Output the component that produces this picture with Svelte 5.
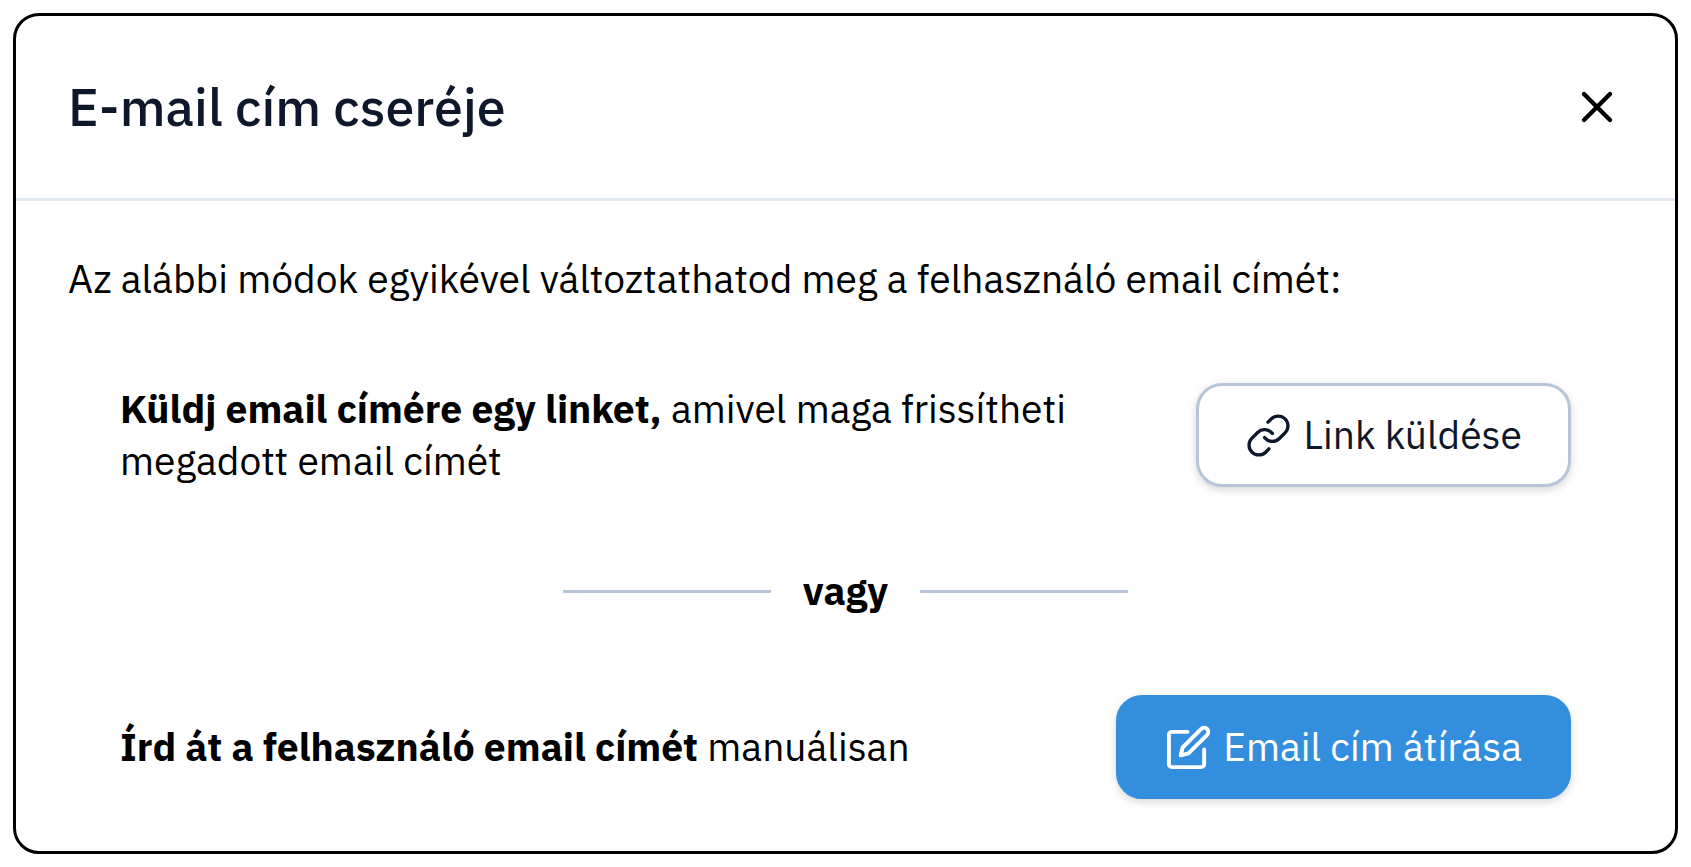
<script>
  let open = $state(true);
</script>

{#if open}
  <div class="dialog" role="dialog" aria-labelledby="dialog-title">
    <header>
      <h1 id="dialog-title">E-mail cím cseréje</h1>
      <button class="close" type="button" aria-label="Bezárás" onclick={() => (open = false)}>
        <svg viewBox="0 0 24 24" aria-hidden="true"><path d="M18 6 6 18M6 6l12 12" /></svg>
      </button>
    </header>
    <div class="body">
      <p class="intro">Az alábbi módok egyikével változtathatod meg a felhasználó email címét:</p>
      <section class="option">
        <p><strong>Küldj email címére egy linket,</strong> amivel maga frissítheti megadott email címét</p>
        <button class="btn outline" type="button">
          <svg viewBox="0 0 24 24" aria-hidden="true">
            <path d="M10 13a5 5 0 0 0 7.54.54l3-3a5 5 0 0 0-7.07-7.07l-1.72 1.71" />
            <path d="M14 11a5 5 0 0 0-7.54-.54l-3 3a5 5 0 0 0 7.07 7.07l1.71-1.71" />
          </svg>
          <span>Link küldése</span>
        </button>
      </section>
      <div class="divider"><strong>vagy</strong></div>
      <section class="option">
        <p><strong>Írd át a felhasználó email címét</strong> manuálisan</p>
        <button class="btn primary" type="button">
          <svg viewBox="0 0 24 24" aria-hidden="true">
            <path d="M11.5 4h-8A1.5 1.5 0 0 0 2 5.5v15A1.5 1.5 0 0 0 3.5 22h15a1.5 1.5 0 0 0 1.5-1.5V13" />
            <path d="M18.5 2.5a2.121 2.121 0 0 1 3 3L12 15l-4 1 1-4z" />
          </svg>
          <span>Email cím átírása</span>
        </button>
      </section>
    </div>
  </div>
{/if}

<style>
  :global(body) {
    background: #fff;
  }
  .dialog {
    box-sizing: border-box;
    margin: 13px;
    border: 3px solid #000;
    border-radius: 26px;
    background: #fff;
    color: #000;
    font-family: "IBM Plex Sans", Roboto, sans-serif;
    font-size: 39px;
    line-height: 52px;
  }
  header {
    display: flex;
    align-items: center;
    justify-content: space-between;
    padding: 52px;
    border-bottom: 3px solid #e2e8f0;
  }
  h1 {
    margin: 0;
    color: #0f172a;
    font-size: 52px;
    line-height: 78px;
    font-weight: 500;
  }
  p {
    margin: 0;
  }
  svg {
    flex: none;
    fill: none;
    stroke: currentColor;
    stroke-linecap: round;
    stroke-linejoin: round;
  }
  .close {
    display: flex;
    padding: 0;
    border: 0;
    background: none;
    color: #000;
    cursor: pointer;
  }
  .close svg {
    width: 52px;
    height: 52px;
    stroke-width: 2;
  }
  .body {
    padding: 52px;
  }
  .option {
    display: flex;
    align-items: center;
    justify-content: space-between;
    gap: 104px;
    padding: 0 52px;
  }
  .intro {
    margin-bottom: 78px;
  }
  .divider {
    display: flex;
    align-items: center;
    justify-content: center;
    gap: 32px;
    margin: 78px 0;
  }
  .divider::before,
  .divider::after {
    content: "";
    width: 208px;
    height: 3px;
    background: #b8c5d9;
  }
  .btn {
    display: flex;
    flex: none;
    align-items: center;
    gap: 11px;
    height: 104px;
    padding: 0 46px;
    border: 3px solid;
    border-radius: 26px;
    box-shadow: 0 3px 8px rgb(0 0 0 / 16%);
    font: inherit;
    cursor: pointer;
  }
  .btn svg {
    width: 47px;
    height: 47px;
    stroke-width: 1.7;
  }
  .outline {
    border-color: #b8c5d9;
    background: #fff;
    color: #0f172a;
  }
  .primary {
    border-color: #338fdd;
    background: #338fdd;
    color: #fff;
  }
  .primary svg {
    stroke-width: 2;
  }
</style>
